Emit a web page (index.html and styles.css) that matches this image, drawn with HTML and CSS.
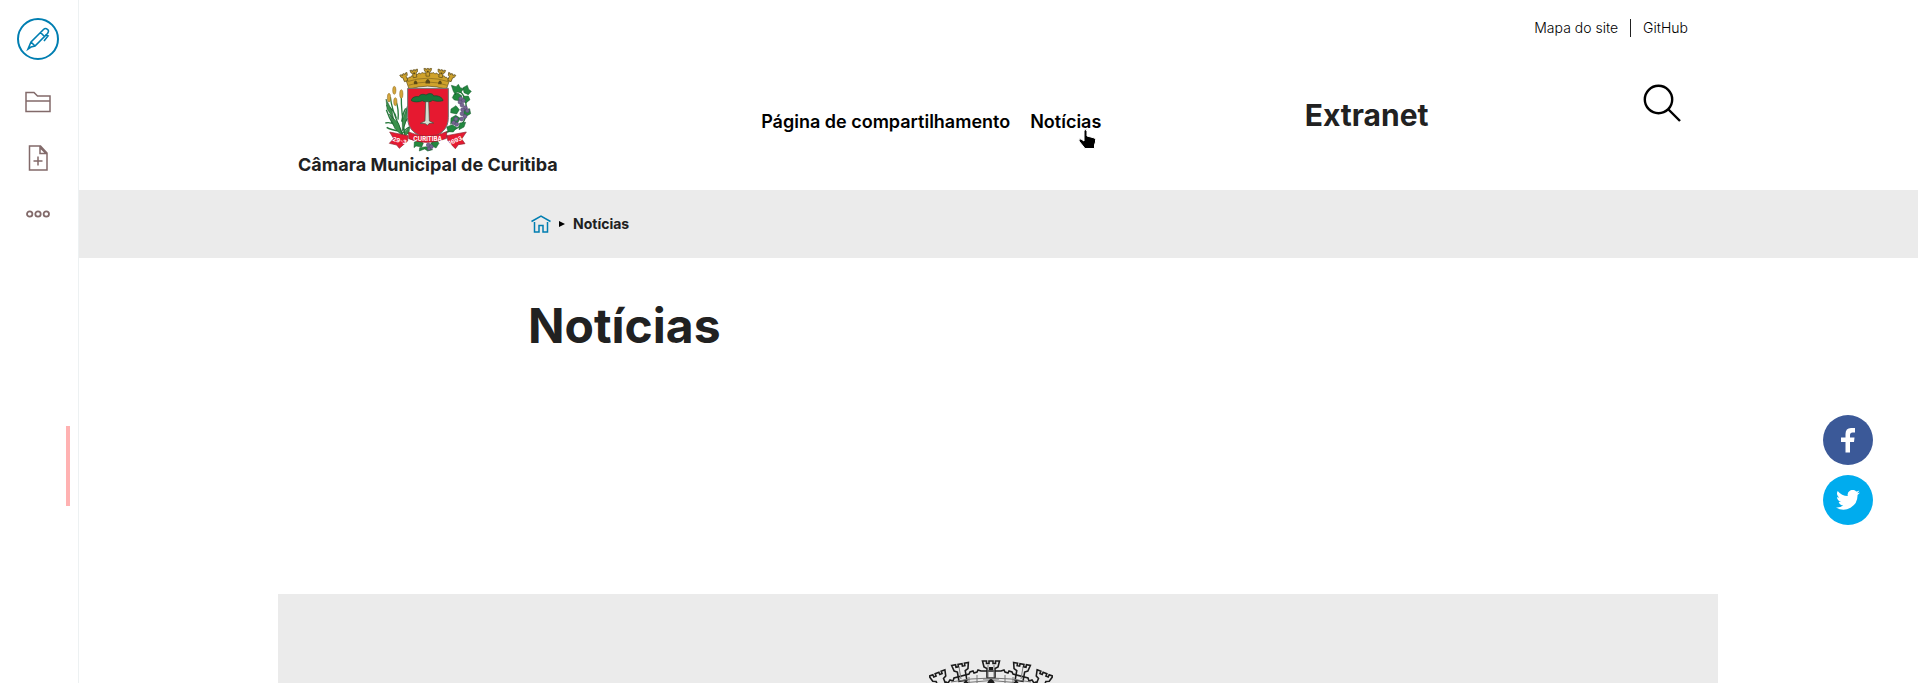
FILE: index.html
```html
<!DOCTYPE html>
<html lang="pt-BR">
<head>
<meta charset="utf-8">
<meta name="viewport" content="width=device-width, initial-scale=1">
<title>Notícias – Câmara Municipal de Curitiba</title>
<link rel="stylesheet" href="styles.css">
</head>
<body>
<aside class="toolbar" aria-label="Barra de edição">
  <button class="tool tool-edit" aria-label="Editar">
    <svg width="42" height="42" viewBox="0 0 42 42" fill="none" stroke="currentColor" stroke-width="1.6"><circle cx="21" cy="21" r="20" stroke-width="2"/><path d="M11 31l3-7L26.500 11.500q2-2 4 0q2 1 0 4L18 28l-4 1zM14 24l4 4M23.500 14.500l4 4M28 17l3 1-4 5"/></svg>
  </button>
  <button class="tool" aria-label="Conteúdo">
    <svg width="26" height="22" viewBox="0 0 26 22" fill="none" stroke="currentColor" stroke-width="1.500"><path d="M1 1.500h8l3.500 3.500H25v15.500H1zM1 10h24"/></svg>
  </button>
  <button class="tool" aria-label="Adicionar">
    <svg width="20" height="26" viewBox="0 0 20 26" fill="none" stroke="currentColor" stroke-width="1.500"><path d="M1.500 1h11L19 8v17H1.500zM12 1v7.500h7M10 11.500v9M5.500 16h9M12.500 3l5 5"/></svg>
  </button>
  <button class="tool" aria-label="Mais">
    <svg width="24" height="8" viewBox="0 0 24 8" fill="none" stroke="currentColor" stroke-width="1.800"><circle cx="3.700" cy="4" r="2.700"/><circle cx="12" cy="4" r="2.700"/><circle cx="20.300" cy="4" r="2.700"/></svg>
  </button>
  <button class="handle" aria-label="Recolher barra"></button>
</aside>

<header class="header">
  <div class="container">
    <nav class="tools" aria-label="Ferramentas">
      <a href="#mapa">Mapa do site</a>
      <a href="#github">GitHub</a>
    </nav>
    <div class="masthead">
      <a class="logo" href="#inicio">
        <svg width="90" height="85" viewBox="38 20 270 255" aria-hidden="true">
          <defs>
            <path id="tower" d="M-8.500 0h4v2.500h2.500V0h4v2.500h2.500V0h4L7 6 4 7.500V17h-8V7.500L-7 6z"/>
            <g id="crown">
              <path d="M14 27l3-5 2 1 2-3 3 1 1-3 15-4 1-2 3-1 1 2 3-1 1-2 3 1h20l3-1 1 2 3 1 1-2 3 1 1 2 15 4 1 3 3-1 2 3 2-1 3 5-7 20q-42-14-82 0z"/>
              <use href="#tower" x="62" y="1"/>
              <use href="#tower" transform="translate(31 4) rotate(-10)"/>
              <use href="#tower" transform="translate(93 4) rotate(10)"/>
              <use href="#tower" transform="translate(8 13) rotate(-22)"/>
              <use href="#tower" transform="translate(116 13) rotate(22)"/>
            </g>
          </defs>
          <g transform="translate(88 23) scale(1.36)" stroke="#5b4a16" stroke-width="1.500" fill="#cfa22b">
            <use href="#crown"/>
            <path fill="none" stroke-width="1" d="M17 30q45-15 90 0M20 38q42-14 84 0"/>
            <path fill="#5b4a16" stroke="none" d="M57 30q5-12 10 0v4H57zM31 32q4-9 8 0v4h-7zM85 32q4-9 8 0l-1 4h-7zM60 6h4v4h-4zM30 10h4v4h-4zM90 10h4v4h-4z"/>
          </g>
          <g stroke="#26783b" stroke-width="4" fill="none">
            <path d="M100 230C85 190 65 160 60 110M104 226C96 175 92 150 93 110M94 220Q64 196 48 148M82 195Q60 184 45 188M91 213Q59 208 49 201M99 211Q103 176 118 171M94 184Q98 157 106 144M78 174Q72 147 48 135M96 220Q112 198 119 201M83 178Q86 148 77 122"/>
          </g>
          <g stroke="#175328" stroke-width="1.500" fill="#3a914b">
            <path d="M85 190l-28-29 16 43 23 23zM96 180l15-42-2 37-13 38zM65 151l-18-35 3 29 20 32zM102 218l17-22-3 19-12 14z"/>
          </g>
          <g fill="#d4a63a" stroke="#8b692c" stroke-width="1.500"><ellipse cx="72" cy="90" rx="5" ry="12"/><ellipse cx="93" cy="101" rx="5" ry="13"/><ellipse cx="56" cy="112" rx="5" ry="13"/><ellipse cx="75" cy="124" rx="5" ry="12"/></g>
          <path fill="none" stroke="#26783b" stroke-width="4" d="M238 212q50-12 50-63t-29-60M180 253q25-30 65-44M155 253q-18-30-44-35"/>
          <g fill="#23883f" stroke="#14562a" stroke-width="1.500">
            <path d="M243 75l14 4 7-7 6 10 10 3-9 12-11-2-5 8-6-10zM278 82l13-7 4 12 8 6-9 10-13-6zM251 102l12-4 12 9-8 14-15-2-6-7zM280 108l14-1 5 11-12 10-9-8zM242 146l15-10 10 12-8 13-18-4zM281 149l17-4 3 15-12 7-9-5zM242 173l14-8 14 9-10 17-14-5-5 6zM268 188l18-2-5 14-15 8zM229 200l16-7 14 8-10 14-16-1zM132 245l15-4 12 7-5 12-17-3-6 5zM185 245l14-5 7 9-9 14-13-7zM148 262l20-3 19 9-15 4-9-6-16 6z"/>
          </g>
          <g fill="#766591" stroke="#4b4568" stroke-width="1.500"><circle cx="271" cy="115" r="6"/><circle cx="279" cy="121" r="6"/><circle cx="269" cy="125" r="6"/><circle cx="275" cy="134" r="6"/><circle cx="285" cy="142" r="6"/><circle cx="277" cy="148" r="6"/><circle cx="291" cy="151" r="6"/><circle cx="275" cy="160" r="6"/><circle cx="284" cy="168" r="6"/><circle cx="274" cy="176" r="6"/><circle cx="257" cy="176" r="6"/><circle cx="250" cy="187" r="6"/><circle cx="259" cy="192" r="6"/><circle cx="174" cy="254" r="6"/><circle cx="183" cy="259" r="6"/><circle cx="176" cy="265" r="5"/></g>
          <path d="M112 84h122v88c0 35-23 53-61 62-38-9-61-27-61-62z" fill="#e61930" stroke="#6e7774" stroke-width="3"/>
          <path d="M123 121c0-10 14-14 22-12 6-10 18-7 22-5 13-8 22-3 23 3 13-3 28 5 28 14-13 4-25 1-31-1-9 7-26 5-31 1-10 5-25 5-33 0z" fill="#18763a" stroke="#12492a" stroke-width="2"/>
          <path d="M166 124h9l2 58 13 6-13 1-6 6-6-5-15-1 14-7z" fill="#d5ded2" stroke="#34523b" stroke-width="2"/>
          <path d="M115 215q55 25 114-1v20q-58 24-114 1zM58 215l55 11-1 16-25 22-8-10-22-5 13-14zM288 215l-59 11 4 16 22 23 9-12 20-3-10-14z" fill="#e61930" stroke="#8c2430" stroke-width="2"/>
          <g fill="#fff" font-family="Inter, sans-serif" font-weight="700" font-size="18" text-anchor="middle"><text x="172" y="241">CURITIBA</text><text x="88" y="247" transform="rotate(15 88 241)">29-3</text><text x="255" y="247" transform="rotate(-23 255 241)">1693</text></g>
        </svg>
        <span>Câmara Municipal de Curitiba</span>
      </a>
      <nav class="nav" aria-label="Principal">
        <a href="#pagina">Página de compartilhamento</a>
        <a class="nav-current" href="#noticias">Notícias
          <svg class="pointer" width="19" height="21" viewBox="0 0 19 21" aria-hidden="true"><path d="M6 1.500Q8-.5 9 2v5l7.500 2q1.500 1 1 4l-1 3v3.500H7L1 12q-.5-3 2-2l3 2z" fill="#000" stroke="#fff" stroke-width="1"/></svg>
        </a>
      </nav>
      <strong class="subsite">Extranet</strong>
      <button class="search" aria-label="Buscar">
        <svg width="38" height="38" viewBox="0 0 38 38" fill="none" stroke="currentColor" stroke-width="2.400"><circle cx="15.500" cy="15.500" r="13.700"/><path d="M25 25l12 12"/></svg>
      </button>
    </div>
  </div>
</header>

<nav class="breadcrumb" aria-label="Trilha">
  <div class="narrow crumbs">
    <a class="home" href="#inicio" aria-label="Início"><svg width="20" height="18" viewBox="0 0 20 18" fill="none" stroke="currentColor" stroke-width="1.500"><path d="M.5 6.500L10 1l9.500 5.500M3.500 7v10H8v-6.500h4V17h4.500V7"/></svg></a>
    <svg width="6" height="6" viewBox="0 0 6 6" aria-hidden="true"><path d="M0 0l6 3-6 3z"/></svg>
    <span>Notícias</span>
  </div>
</nav>

<main class="main">
  <div class="narrow heading"><h1>Notícias</h1></div>
  <section class="panel" aria-label="Destaque">
    <svg width="124" height="50" viewBox="0 0 124 50" fill="none" stroke="#1c1c1c" stroke-width="1.600" aria-hidden="true">
      <use href="#crown"/>
      <path stroke="#777" stroke-width="1" d="M17 28q45-15 90 0M22 22q40-8 80 0M59 5v12M65 5v12M30 7l2 12M94 7l-2 12M40 17v8M48 15v8M76 15v8M84 17v8M54 19h16"/>
      <path fill="#1c1c1c" stroke="none" d="M57 26q5-14 10 0zM34 24q3-8 7 2zM83 26q4-10 7-2zM60 7h4v3h-4z"/>
    </svg>
  </section>
</main>

<div class="share">
  <a class="share-link facebook" href="#facebook" aria-label="Compartilhar no Facebook"><svg width="14" height="25" viewBox="0 0 14 25" fill="#fff"><path d="M4.500 24.500V14H0V9.500h4.500V6Q4.500 0 10 0h4v4.500h-2.500Q9 4.500 9 7v2.500h4.500L13 14H9v10.500z"/></svg></a>
  <a class="share-link twitter" href="#twitter" aria-label="Compartilhar no Twitter"><svg width="24" height="20" viewBox="0 0 24 20" fill="#fff"><path d="M24 2.400a10 10 0 0 1-2.800.8A5 5 0 0 0 23.300.4a10 10 0 0 1-3.100 1.200 4.900 4.900 0 0 0-8.400 4.500A14 14 0 0 1 1.700.9a4.900 4.900 0 0 0 1.500 6.600 5 5 0 0 1-2.200-.6c0 2.300 1.600 4.400 3.900 4.900a5 5 0 0 1-2.200.1 4.900 4.900 0 0 0 4.600 3.400A10 10 0 0 1 0 17.400a14 14 0 0 0 21.500-12.500A10 10 0 0 0 24 2.400z"/></svg></a>
</div>
</body>
</html>
```
FILE: styles.css
```css
* { box-sizing: border-box; }

body {
  display: flex;
  flex-direction: column;
  min-height: 100vh;
  margin: 0;
  padding-left: 78px;
  background: #fff;
  color: #212121;
  font-family: Inter, "Liberation Sans", sans-serif;
}

a { color: inherit; text-decoration: none; }
button { padding: 0; border: 0; background: none; color: inherit; cursor: pointer; }
svg { display: block; }

.toolbar {
  position: fixed;
  top: 0;
  bottom: 0;
  left: 0;
  display: flex;
  flex-direction: column;
  align-items: center;
  gap: 30px;
  width: 79px;
  padding: 19px 3px 0 0;
  border-right: 1px solid #edf1f2;
  color: #826a6a;
}
.tool { display: flex; align-items: center; min-height: 26px; }
.tool-edit { height: 40px; color: #007eb1; }
.handle {
  position: absolute;
  top: 426px;
  right: 8px;
  width: 4px;
  height: 80px;
  background: #ffb2b2;
}

.container { max-width: 1440px; margin: 0 auto; padding: 0 20px; }
.narrow { width: 100%; max-width: 940px; margin: 0 auto; }

.tools {
  display: flex;
  justify-content: flex-end;
  padding: 19px 10px 0 0;
  color: #000;
  font-size: 14px;
  font-weight: 300;
  line-height: 18px;
}
.tools a + a { margin-left: 12px; padding-left: 12px; border-left: 1px solid #212121; }

.masthead {
  display: flex;
  justify-content: space-between;
  align-items: flex-start;
  padding: 30px 0 12px;
}
.logo {
  display: flex;
  flex-direction: column;
  align-items: center;
  font-size: 18px;
  font-weight: 700;
  line-height: 26px;
}
.nav {
  display: flex;
  gap: 20px;
  padding-top: 43px;
  color: #000;
  font-size: 18px;
  font-weight: 600;
  line-height: 24px;
}
.nav-current { position: relative; }
.pointer { position: absolute; right: 4px; top: 19px; }
.subsite { padding-top: 28px; font-size: 30px; font-weight: 700; line-height: 40px; }
.search { padding: 17px 17px 0 11px; color: #000; }

.breadcrumb { background: #ebebeb; }
.crumbs {
  display: flex;
  align-items: center;
  gap: 8px;
  padding: 22px 3px;
  font-size: 14px;
  font-weight: 700;
  line-height: 24px;
}
.home { color: #007eb1; }

.main { display: flex; flex: 1; flex-direction: column; }
.heading { padding: 38px 0 238px; }
h1 { margin: 0; font-size: 48px; font-weight: 700; line-height: 60px; }
.panel {
  display: flex;
  flex: 1 0 0;
  justify-content: center;
  align-self: center;
  width: 100%;
  max-width: 1440px;
  overflow: hidden;
  padding: 66px 14px 0 0;
  background: #ebebeb;
}
.panel svg { flex: none; }

.share {
  position: fixed;
  top: 415px;
  right: 45px;
  display: flex;
  flex-direction: column;
  gap: 10px;
}
.share-link {
  display: flex;
  align-items: center;
  justify-content: center;
  width: 50px;
  height: 50px;
  border-radius: 50%;
}
.facebook { background: #3b5998; }
.twitter { background: #00acee; }
```
